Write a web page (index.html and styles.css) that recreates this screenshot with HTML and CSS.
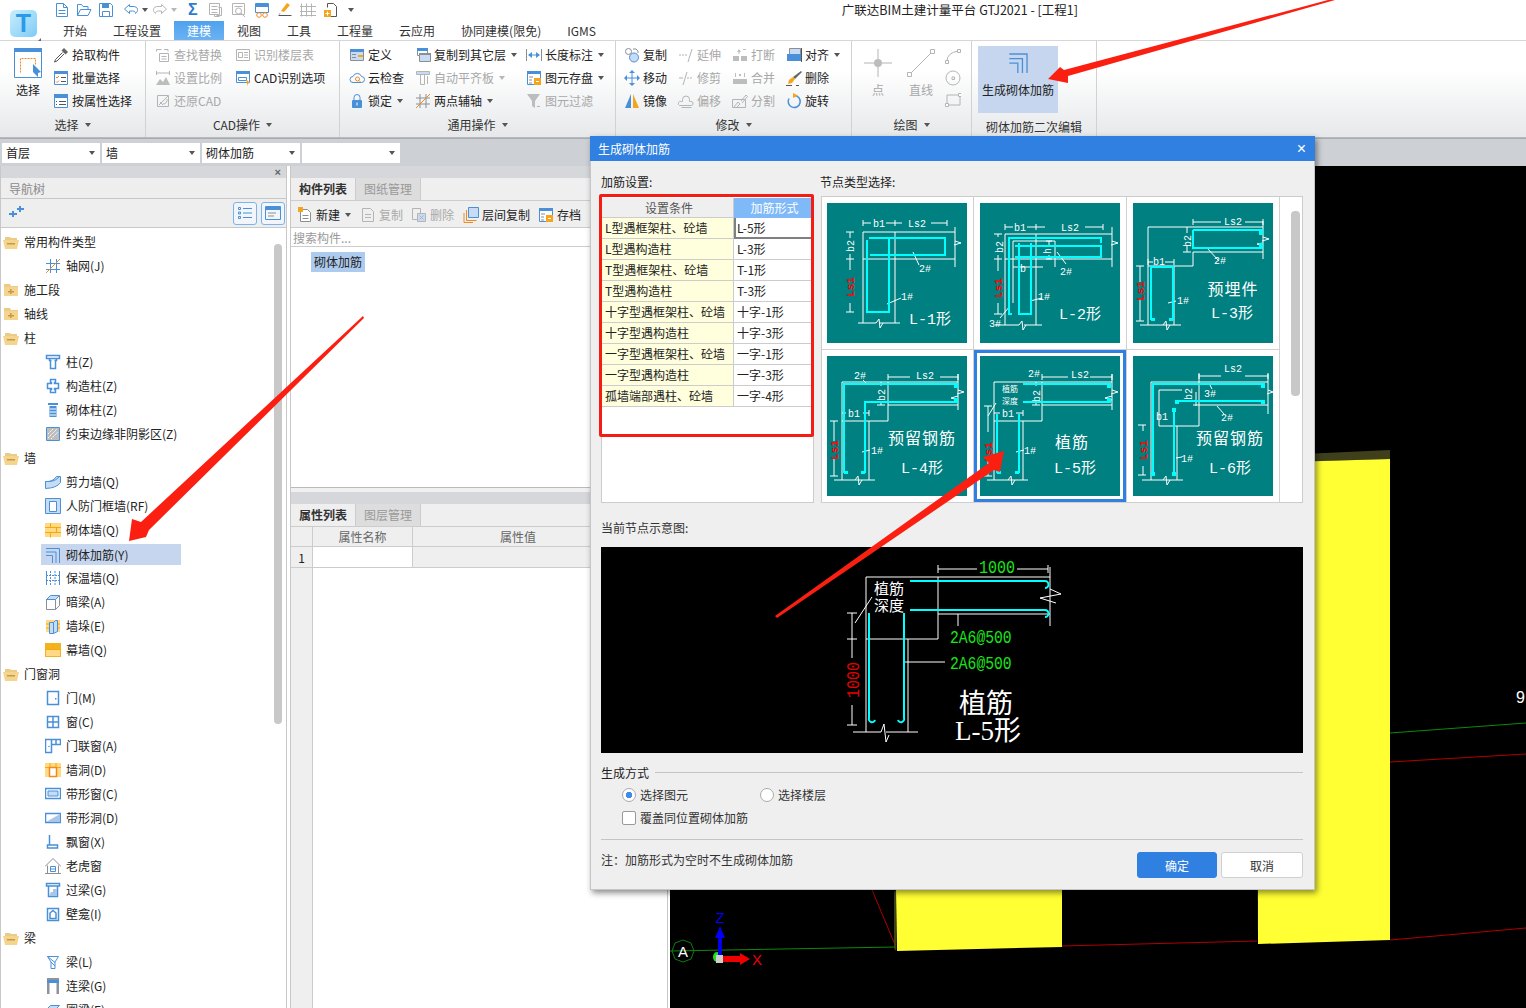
FILE: index.html
```html
<!DOCTYPE html>
<html lang="zh">
<head>
<meta charset="utf-8">
<title>广联达BIM土建计量平台 GTJ2021</title>
<link rel="stylesheet" href="styles.css">
</head>
<body>
<svg class="defs" aria-hidden="true">
<symbol id="new" viewBox="0 0 16 16"><path class="b fw" d="M2.500 1.500h7l4 4v9h-11z"/><path class="b" d="M9.500 1.500v4h4M4.500 8.500h7M4.500 11.500h7"/></symbol>
<symbol id="open" viewBox="0 0 16 16"><path class="b" d="M1.500 13.500v-11h4l1.500 2h5v3"/><path class="b" d="M1.500 13.500l3-6h10.500l-3 6z"/></symbol>
<symbol id="save" viewBox="0 0 16 16"><path class="b" d="M1.500 1.500h11l2 2v11h-13z"/><path class="fb" d="M4 2h7v4H4z"/><path class="b" d="M4.500 14.500v-5h7v5"/></symbol>
<symbol id="undo" viewBox="0 0 16 16"><path class="b" d="M6.500 2.500l-5 4.500 5 4.500v-2.500h3c2 0 3 1 3 2.500 1.500-1 2-2.500 2-4 0-2-2-3-4.500-3h-3.500z"/></symbol>
<symbol id="redo" viewBox="0 0 16 16"><path class="g" d="M9.500 2.500l5 4.500-5 4.500v-2.500h-3c-2 0-3 1-3 2.500-1.500-1-2-2.500-2-4 0-2 2-3 4.500-3h3.500z"/></symbol>
<symbol id="qdoc" viewBox="0 0 16 16"><path class="g" d="M1.500 1.500h10v11h-10zM3.500 4.500h6M3.500 7.500h6M3.500 10.500h6"/><path class="g" d="M10.500 5.500h3v8h-5M6.500 12.500v2h5"/></symbol>
<symbol id="qcalc" viewBox="0 0 16 16"><path class="g" d="M1.500 1.500h12v11h-12zM3.500 4.500h8"/><circle class="g" cx="7.500" cy="9" r="3"/><path class="g" d="M10 11l4 4"/></symbol>
<symbol id="qrep" viewBox="0 0 16 16"><path class="b" d="M1.500 1.500h13v9h-13z"/><path class="fb" d="M2 2h12v3H2z"/><circle class="o" cx="5" cy="13" r="2.300"/><circle class="o" cx="11" cy="13" r="2.300"/></symbol>
<symbol id="qbrush" viewBox="0 0 16 16"><path class="fo" d="M10 1l3 2-6 7-3-1z"/><path class="k" d="M1.500 13.500h13"/><path class="g" d="M3 11l-1 2"/></symbol>
<symbol id="qgrid" viewBox="0 0 16 16"><path class="g" d="M1.500 1.500v13M6.500 1.500v13M11.500 1.500v13M0 4.500h16M0 9.500h16M0 13.500h16"/></symbol>
<symbol id="qadd" viewBox="0 0 16 16"><path class="k" d="M4.500 5.500v-4h6l3 3v10h-6"/><path class="fo" d="M1 8h7v7H1z"/><path class="w1" d="M4.500 9.500v4M2.500 11.500h4"/></symbol>

<symbol id="big-sel" viewBox="0 0 28 30"><path class="b fw" d="M.5.500h27v29h-27z"/><path class="fb" d="M0 0h28v4H0z"/><path class="o dash" d="M6.500 24.500v-14h15v6"/><path class="fb" d="M19 16l8 8-3 1 0 4-5-5z"/></symbol>
<symbol id="pick" viewBox="0 0 16 16"><path class="fk" d="M11 1l4 4-2.500 2.500-4-4z"/><path class="k" d="M9.500 5.500l-7 7-1 2.500 2.500-1 7-7"/></symbol>
<symbol id="batch" viewBox="0 0 16 16"><path class="b fw" d="M1.500 1.500h13v13h-13z"/><path class="fb" d="M1 1h14v3H1z"/><path class="o" d="M3 7l1 1 2-2M3 11.500l1 1 2-2"/><path class="k" d="M8 7.500h5M8 11.500h5"/></symbol>
<symbol id="attr" viewBox="0 0 16 16"><path class="b fw" d="M1.500 1.500h13v13h-13z"/><path class="fb" d="M1 1h14v4H1z"/><path class="k" d="M3 8.500h1M6 8.500h7M3 11.500h1M6 11.500h7"/></symbol>
<symbol id="find" viewBox="0 0 16 16"><path class="g" d="M1.500 4.500v-2h5M9 2.500h4v2M4.500 6.500h9v8h-9zM6.500 9.500h5M6.500 12h5"/></symbol>
<symbol id="floor" viewBox="0 0 16 16"><path class="g" d="M1.500 2.500h13v11h-13zM3.500 5.500h4v5h-4zM9 5.500h4M9 8h4M9 10.500h4"/></symbol>
<symbol id="ratio" viewBox="0 0 16 16"><path class="g" d="M1.500 1v4M14.500 1v4M1.500 3h13"/><path class="fg" d="M1 15l4-6 3 3 3-5 4 8z"/></symbol>
<symbol id="rest" viewBox="0 0 16 16"><path class="g" d="M2.500 2.500h11v11h-11zM4 12L13 3M8 12l-3-3M12 6a4 4 0 0 1-4 5"/></symbol>
<symbol id="cadopt" viewBox="0 0 16 16"><path class="b fw" d="M1.500 1.500h13v11h-13z"/><path class="fb" d="M1 1h14v3H1z"/><path class="b" d="M3.500 7.500h8v3h-8z"/><path class="fo" d="M11 9l4 4-2 .5-.5 2.500z"/></symbol>
<symbol id="def" viewBox="0 0 16 16"><path class="k1 fl" d="M1.500 2.500h13v11h-13z"/><path class="fb" d="M1 2h14v3H1z"/><path class="fo" d="M9 8h5v2H9z"/><path class="k1" d="M3 7.500h4M3 10.500h4"/></symbol>
<symbol id="cloud" viewBox="0 0 16 16"><path class="b" d="M4 12.500a3 3 0 0 1 0-6 4.500 4.500 0 0 1 8.500 0 3 3 0 0 1 0 6z"/><circle class="o" cx="8.500" cy="9" r="2"/><path class="o" d="M10 10.500l1.500 1.500"/></symbol>
<symbol id="lock" viewBox="0 0 16 16"><path class="b" d="M5 7V4.500a3 3 0 0 1 6 0V7"/><rect class="fb" x="3" y="7" width="10" height="8" rx="1"/><path class="w1" d="M8 9.500v3"/></symbol>
<symbol id="cpf" viewBox="0 0 16 16"><path class="k1 fw" d="M2.500 1.500h10v7h-10z"/><path class="fb" d="M2 1h11v3H2z"/><path class="k1 fl" d="M4.500 6.500h11v8h-11z"/><path class="fg2" d="M4 6h12v2H4z"/></symbol>
<symbol id="flat" viewBox="0 0 16 16"><path class="fl g" d="M1.500 1.500h13v3h-13z"/><path class="g" d="M5.500 4.500h4v10h-4z"/><path class="g" d="M12.500 6v8"/></symbol>
<symbol id="twop" viewBox="0 0 16 16"><path class="k1" d="M1 5h14M1 11h14M5 1v14M11 1v14"/><path class="o" d="M1 15L15 1"/></symbol>
<symbol id="len" viewBox="0 0 16 16"><path class="k1" d="M.5 2v12M15.500 2v12"/><path class="b" d="M3 8h10"/><path class="fb" d="M6 5v6L2 8zM10 5v6l4-3z"/></symbol>
<symbol id="stor" viewBox="0 0 16 16"><path class="b fw" d="M1.500 1.500h13v13h-13z"/><path class="fb" d="M1 1h14v3H1z"/><path class="k1" d="M3 7h4M3 10h3M3 13h3"/><path class="fo" d="M8 8h7v7H8z"/><path class="w1" d="M10 11.500h3"/></symbol>
<symbol id="filt" viewBox="0 0 16 16"><path class="fg" d="M1 1h13L9 8v7l-3-2V8z"/><path class="g" d="M11 13.500h3"/></symbol>
<symbol id="cpy" viewBox="0 0 16 16"><circle class="k1" cx="4.500" cy="4.500" r="3"/><circle class="b fl" cx="10" cy="10.500" r="4.500"/><path class="k1" d="M9 2h3l2 2v2"/></symbol>
<symbol id="mov" viewBox="0 0 16 16"><path class="b" d="M8 2v12M2 8h12"/><path class="fb" d="M8 0l3 3H5zM8 16l3-3H5zM0 8l3-3v6zM16 8l-3-3v6z"/></symbol>
<symbol id="mir" viewBox="0 0 16 16"><path class="fb" d="M7 1v14H1z"/><path class="fo" d="M9 1v14h6z"/></symbol>
<symbol id="ext" viewBox="0 0 16 16"><path class="g dash" d="M1 8h8"/><path class="g" d="M14 2L10 15"/></symbol>
<symbol id="trm" viewBox="0 0 16 16"><path class="g" d="M1 8h4"/><path class="g dash" d="M9 8h6"/><path class="g" d="M9 2L5 15"/></symbol>
<symbol id="offs" viewBox="0 0 16 16"><path class="g" d="M1.500 12.500a2 2 0 0 1 2-4h1v-2a3.500 3.500 0 0 1 7 0v2h1a2 2 0 0 1 1 4zM3.500 14.500h10"/></symbol>
<symbol id="brk" viewBox="0 0 16 16"><path class="fg" d="M1 9h6v5H1zM9 9h6v5H9zM7 2l-2 3h1.500v2h1V5H9zM14 2h-3v1h3z"/></symbol>
<symbol id="mrg" viewBox="0 0 16 16"><path class="fg" d="M1 9h14v5H1zM3 3h1v4H3zM12 3h1v4h-1zM7 4h2v2H7z"/></symbol>
<symbol id="spl" viewBox="0 0 16 16"><path class="g" d="M.5 6.500h13v8H.5zM2 14L6 9l2 2-3 3M9 8l5-6 1.500 1.500L10 10"/></symbol>
<symbol id="alg" viewBox="0 0 16 16"><path class="k1 fl" d="M3.500 1.500h11v7h-11z"/><path class="fb" d="M1 7h14v7H1z"/><path class="k" d="M15.500 1v14"/></symbol>
<symbol id="del" viewBox="0 0 16 16"><path class="fk" d="M15 1l1 1-7 7-2-2z"/><path class="fo" d="M7 7l2 2-3 4-4 1 1-4z"/><path class="k" d="M0 15.500h6M10 15.500h3"/></symbol>
<symbol id="rot" viewBox="0 0 16 16"><path class="b s2" d="M8.500 2.500a6 6 0 1 1-5.500 3"/><path class="fo" d="M7 0l5 2.500L7 5z"/></symbol>
<symbol id="big-pt" viewBox="0 0 28 28"><path class="g" d="M14 0v10M14 18v10M0 14h10M18 14h10"/><circle class="fg" cx="14" cy="14" r="4"/></symbol>
<symbol id="big-ln" viewBox="0 0 30 30"><path class="g" d="M4 26L26 4"/><path class="g fw" d="M1.500 24.500h4v4h-4zM24.500 1.500h4v4h-4z"/></symbol>
<symbol id="arc" viewBox="0 0 16 16"><path class="g" d="M2 13Q2 5 13 3"/><path class="g fw" d="M.5 12.500h3v3h-3zM12.500 1.500h3v3h-3z"/></symbol>
<symbol id="circ" viewBox="0 0 16 16"><circle class="g" cx="8" cy="8" r="7"/><path class="g fw" d="M7 7h2.500v2.500H7z"/></symbol>
<symbol id="rct" viewBox="0 0 16 16"><path class="g" d="M2 3h13v10H2z"/><path class="g fw" d="M.5 11.500h3v3h-3zM13.500 1.500h3v3h-3z"/></symbol>
<symbol id="jj" viewBox="0 0 16 16"><path class="b" d="M1 1.500h13.500V16M1 5h10v11M1 8.500h6.500V16"/></symbol>

<symbol id="fo-open" viewBox="0 0 16 14"><path class="f-a" d="M2 2h5l1 1h6v3H2z"/><path class="f-b" d="M0 5h16l-2 9H2z"/><path class="f-c" d="M4 8h8v1.500H4z"/></symbol>
<symbol id="fo-plus" viewBox="0 0 16 14"><path class="f-a" d="M1 1h6l1 2h7v2H1z"/><path class="f-b" d="M1 4h14v9H1z"/><path class="f-c" d="M5 8h6v1.500H5zM7 6h1.500v5H7z"/></symbol>

<symbol id="t-grid" viewBox="0 0 16 16"><path class="b" d="M1 5.500h14M1 11.500h14M5.500 1v14M11.500 1v14"/><path class="o" d="M1 15L15 1"/></symbol>
<symbol id="t-col" viewBox="0 0 16 16"><path class="b s2" d="M1.500 1.500h13v3h-13zM4.500 4.500v2h2M11.500 4.500v2h-2M5.500 6.500v8h5v-8"/></symbol>
<symbol id="t-gz" viewBox="0 0 16 16"><path class="b s2" d="M5.500 1.500h5v3h-1v1h4v5h-4v1h1v3h-5v-3h1v-1h-4v-5h4v-1h-1z"/></symbol>
<symbol id="t-qz" viewBox="0 0 16 16"><path class="fb" d="M3 1h10v2H3zM4.500 4h7v11h-7z"/><path class="w1" d="M5 7h6M5 10h6M5 13h6"/></symbol>
<symbol id="t-yb" viewBox="0 0 16 16"><path class="fg" d="M2 2h12v12H2z"/><path class="b" d="M1.500 1.500h13v13h-13z"/><path class="w1 dash" d="M3 12L12 3M6 13l7-7M3 8l5-5"/></symbol>
<symbol id="t-jlq" viewBox="0 0 16 16"><path class="b fl" d="M.5 7.500Q8 8 11.500 2.500h4v6Q12 14 .5 14.500z"/><path class="b" d="M.5 7.500h4Q11 7 15 2"/></symbol>
<symbol id="t-rf" viewBox="0 0 16 16"><path class="fl b" d="M.5.500h15v15H.5z"/><path class="b fw" d="M4.500 3.500h7v10h-7z"/></symbol>
<symbol id="t-qt" viewBox="0 0 16 14"><path class="fy" d="M0 0h16v14H0z"/><path class="wy" d="M0 4.500h16M0 9.500h16M5.500 0v4.500M11.500 4.500v5M5.500 9.500v5"/></symbol>
<symbol id="t-bw" viewBox="0 0 16 16"><path class="b" d="M1.500 1v14M14.500 1v14"/><path class="b dash" d="M5.500 1v14M10 1v14M1 5.500h14M1 10.500h14"/></symbol>
<symbol id="t-al" viewBox="0 0 16 16"><path class="k1 fw" d="M1.500 5.500h9v10h-9z"/><path class="b fl" d="M1.500 5.500l4-4h9l-4 4z"/><path class="k1" d="M10.500 15.500l4-4v-10"/></symbol>
<symbol id="t-dz" viewBox="0 0 16 16"><path class="fy" d="M1 2h14v12H1z"/><path class="wy" d="M1 6h14M1 10h14"/><path class="b fl" d="M4.500 4.500h4v11h-4zM8.500 4.500l2-2h2v11l-4 2"/></symbol>
<symbol id="t-mq" viewBox="0 0 16 14"><path class="fo2" d="M0 0h16v14H0z"/><path class="wy" d="M0 6.500h16M8 0v6.500"/><path class="fy" d="M1 7h14v6H1z"/></symbol>
<symbol id="t-door" viewBox="0 0 16 16"><path class="b s2" d="M2.500 1.500h11v13h-11z"/><path class="fb" d="M10 8h1.500v1.500H10z"/></symbol>
<symbol id="t-win" viewBox="0 0 16 16"><path class="b s2" d="M2.500 2.500h11v11h-11zM8 2.500v11M2.500 8h11"/></symbol>
<symbol id="t-dw" viewBox="0 0 16 16"><path class="b s2" d="M.5 1.500h6v13h-6zM6.500 1.500h9v5h-9zM11 1.500v5M4 8v1"/></symbol>
<symbol id="t-hole" viewBox="0 0 16 14"><path class="fy" d="M0 0h16v14H0z"/><path class="wy" d="M0 4.500h16M5 0v14M11 0v14"/><path class="o fw s2" d="M4.500 4.500h7v9h-7z"/></symbol>
<symbol id="t-bwin" viewBox="0 0 16 16"><path class="b fw s2" d="M.5 2.500h15v10H.5z"/><path class="b fl" d="M3 5h10v5H3z"/></symbol>
<symbol id="t-bhole" viewBox="0 0 16 16"><path class="b fw s2" d="M.5 3.500h15v9H.5z"/><path class="fb2" d="M1 12L15 4v8z"/></symbol>
<symbol id="t-pc" viewBox="0 0 16 16"><path class="b s2" d="M4.500 1v10h8v3h-10v-3h2"/></symbol>
<symbol id="t-lh" viewBox="0 0 16 16"><path class="k1" d="M0 8.500L8 .5l8 8M2.500 7.500v8h11v-8M0 15.500h16"/><path class="b" d="M5.500 8.500h5v5h-5zM5.500 11h5"/></symbol>
<symbol id="t-gl" viewBox="0 0 16 16"><path class="b s2" d="M1.500 1.500h13v2.500h-13zM3.500 4v10.500h9V4"/><path class="fb2" d="M4 14l2-4h2V7h4v7z"/></symbol>
<symbol id="t-bk" viewBox="0 0 16 16"><path class="b s2" d="M2.500 2.500h11v12h-11zM5 12.500V7l3-2.500L11 7v5.500z"/></symbol>
<symbol id="t-l" viewBox="0 0 16 16"><path class="b" d="M2.500 2.500h11L10 8v6.500H6V8zM2.500 2.500l7.500 6M6 8l4 4"/></symbol>
<symbol id="t-ll" viewBox="0 0 16 16"><path class="fg3" d="M2 0h12v16h-2.500V5h-7v11H2z"/><path class="fb" d="M2 2h12v3H2z"/></symbol>
<symbol id="t-ql" viewBox="0 0 16 16"><path class="b fl" d="M1.500 7.500l4-4h9l-4 4zM1.500 7.500v8M10.500 7.500v8"/></symbol>

<symbol id="m-new" viewBox="0 0 16 16"><path class="k1 fw" d="M3.500 2.500h7l3 3v9h-10z"/><path class="k1" d="M5.500 8.500h6M5.500 11.500h6"/><path class="fo" d="M1 0h5v5H1z"/></symbol>
<symbol id="m-cp" viewBox="0 0 16 16"><path class="g" d="M2.500 1.500h8l3 3v10h-11zM5 7.500h6M5 10.500h6"/></symbol>
<symbol id="m-dl" viewBox="0 0 16 16"><path class="g" d="M1.500 1.500h8v11h-8z"/><path class="g fl" d="M6.500 6.500h8v8h-8z"/><path class="g" d="M8.500 8.500l4 4M12.500 8.500l-4 4"/></symbol>
<symbol id="m-lc" viewBox="0 0 16 16"><path class="b fl" d="M5.500.500h10v10h-10z"/><path class="o" d="M3.500 3v10.500h10M1 6v9.500h9"/></symbol>
<symbol id="v-list" viewBox="0 0 16 16"><path class="b" d="M1.500 2.500h2v2h-2zM1.500 7h2v2h-2zM1.500 11.500h2v2h-2zM6 3.500h9M6 8h9M6 12.500h9"/></symbol>
<symbol id="v-win" viewBox="0 0 16 16"><path class="b" d="M.5 1.500h15v13H.5z"/><path class="fb" d="M1 2h14v3H1z"/><path class="k1" d="M3 8h8M3 11h6"/></symbol>
<symbol id="plus2" viewBox="0 0 16 16"><path class="fb" d="M1 8h3V6h2v2h3v2H6v2H4v-2H1zM9 3h2V1h2v2h3v2h-3v2h-2V5H9z"/></symbol>
</svg>

<div class="app">
  <header class="top">
    <div class="logo-cell">
      <svg class="logo" viewBox="0 0 31 31"><defs><linearGradient id="lg" x1="0" y1="0" x2="1" y2="1"><stop offset="0" stop-color="#c9eefc"/><stop offset="1" stop-color="#7ecbf7"/></linearGradient></defs><rect width="27" height="27" rx="5" fill="url(#lg)"/><text x="13.500" y="22" class="logo-t">T</text><path class="logo-c" d="M31 28v3h-3z"/></svg>
    </div>
    <div class="top-r">
      <div class="qat">
        <svg class="i q-t"><use href="#new"/></svg>
        <svg class="i q-t"><use href="#open"/></svg>
        <svg class="i"><use href="#save"/></svg>
        <svg class="i q-sp"><use href="#undo"/></svg><i class="car q-c1"></i>
        <svg class="i q-ti"><use href="#redo"/></svg><i class="car car-g q-c2"></i>
        <span class="sig">Σ</span>
        <svg class="i"><use href="#qdoc"/></svg>
        <svg class="i"><use href="#qcalc"/></svg>
        <svg class="i"><use href="#qrep"/></svg>
        <svg class="i"><use href="#qbrush"/></svg>
        <svg class="i"><use href="#qgrid"/></svg>
        <svg class="i"><use href="#qadd"/></svg>
        <i class="car q-end"></i>
        <span class="title">广联达BIM土建计量平台 GTJ2021 - [工程1]</span>
      </div>
      <nav class="tabs">
        <span class="tab">开始</span><span class="tab">工程设置</span><span class="tab on">建模</span><span class="tab">视图</span><span class="tab">工具</span><span class="tab">工程量</span><span class="tab">云应用</span><span class="tab">协同建模(限免)</span><span class="tab">IGMS</span>
      </nav>
    </div>
  </header>

  <div class="ribbon">
    <section class="grp g1">
      <div class="gb">
        <div class="big"><svg class="i28"><use href="#big-sel"/></svg><span>选择</span></div>
        <div class="col">
          <div class="it"><svg class="i"><use href="#pick"/></svg>拾取构件</div>
          <div class="it"><svg class="i"><use href="#batch"/></svg>批量选择</div>
          <div class="it"><svg class="i"><use href="#attr"/></svg>按属性选择</div>
        </div>
      </div>
      <div class="gl">选择<i class="car"></i></div>
    </section>
    <section class="grp g2">
      <div class="gb">
        <div class="col c2a">
          <div class="it off"><svg class="i"><use href="#find"/></svg>查找替换</div>
          <div class="it off"><svg class="i"><use href="#ratio"/></svg>设置比例</div>
          <div class="it off"><svg class="i"><use href="#rest"/></svg>还原CAD</div>
        </div>
        <div class="col">
          <div class="it off"><svg class="i"><use href="#floor"/></svg>识别楼层表</div>
          <div class="it"><svg class="i"><use href="#cadopt"/></svg>CAD识别选项</div>
        </div>
      </div>
      <div class="gl">CAD操作<i class="car"></i></div>
    </section>
    <section class="grp g3">
      <div class="gb">
        <div class="col c3a">
          <div class="it"><svg class="i"><use href="#def"/></svg>定义</div>
          <div class="it"><svg class="i"><use href="#cloud"/></svg>云检查</div>
          <div class="it"><svg class="i"><use href="#lock"/></svg>锁定<i class="car"></i></div>
        </div>
        <div class="col c3b">
          <div class="it"><svg class="i"><use href="#cpf"/></svg>复制到其它层<i class="car"></i></div>
          <div class="it off"><svg class="i"><use href="#flat"/></svg>自动平齐板<i class="car car-g"></i></div>
          <div class="it"><svg class="i"><use href="#twop"/></svg>两点辅轴<i class="car"></i></div>
        </div>
        <div class="col">
          <div class="it"><svg class="i"><use href="#len"/></svg>长度标注<i class="car"></i></div>
          <div class="it"><svg class="i"><use href="#stor"/></svg>图元存盘<i class="car"></i></div>
          <div class="it off"><svg class="i"><use href="#filt"/></svg>图元过滤</div>
        </div>
      </div>
      <div class="gl">通用操作<i class="car"></i></div>
    </section>
    <section class="grp g4">
      <div class="gb">
        <div class="col c4">
          <div class="it"><svg class="i"><use href="#cpy"/></svg>复制</div>
          <div class="it"><svg class="i"><use href="#mov"/></svg>移动</div>
          <div class="it"><svg class="i"><use href="#mir"/></svg>镜像</div>
        </div>
        <div class="col c4">
          <div class="it off"><svg class="i"><use href="#ext"/></svg>延伸</div>
          <div class="it off"><svg class="i"><use href="#trm"/></svg>修剪</div>
          <div class="it off"><svg class="i"><use href="#offs"/></svg>偏移</div>
        </div>
        <div class="col c4">
          <div class="it off"><svg class="i"><use href="#brk"/></svg>打断</div>
          <div class="it off"><svg class="i"><use href="#mrg"/></svg>合并</div>
          <div class="it off"><svg class="i"><use href="#spl"/></svg>分割</div>
        </div>
        <div class="col">
          <div class="it"><svg class="i"><use href="#alg"/></svg>对齐<i class="car"></i></div>
          <div class="it"><svg class="i"><use href="#del"/></svg>删除</div>
          <div class="it"><svg class="i"><use href="#rot"/></svg>旋转</div>
        </div>
      </div>
      <div class="gl">修改<i class="car"></i></div>
    </section>
    <section class="grp g5">
      <div class="gb">
        <div class="big off b-pt"><svg class="i28"><use href="#big-pt"/></svg><span>点</span></div>
        <div class="big off b-ln"><svg class="i30"><use href="#big-ln"/></svg><span>直线</span></div>
        <div class="col-sm">
          <svg class="i"><use href="#arc"/></svg>
          <svg class="i"><use href="#circ"/></svg>
          <svg class="i"><use href="#rct"/></svg>
        </div>
      </div>
      <div class="gl">绘图<i class="car"></i></div>
    </section>
    <section class="grp g6">
      <div class="gb">
        <div class="hot"><svg class="i21"><use href="#jj"/></svg><span>生成砌体加筋</span></div>
      </div>
      <div class="gl gl6">砌体加筋二次编辑</div>
    </section>
  </div>

  <div class="combos">
    <div class="combo">首层<i class="car"></i></div>
    <div class="combo">墙<i class="car"></i></div>
    <div class="combo">砌体加筋<i class="car"></i></div>
    <div class="combo"><i class="car"></i></div>
  </div>

  <main class="main">
    <aside class="nav">
      <div class="strip"><span class="x">×</span></div>
      <div class="nav-h">导航树</div>
      <div class="nav-t">
        <svg class="i"><use href="#plus2"/></svg>
        <span class="v-gap"></span>
        <span class="vbtn"><svg class="i"><use href="#v-list"/></svg></span>
        <span class="vbtn"><svg class="i"><use href="#v-win"/></svg></span>
      </div>
      <div class="tree">
        <div class="tree-list">
          <div class="row grp-r"><svg class="fd"><use href="#fo-open"/></svg>常用构件类型</div>
          <div class="row ch"><svg class="i"><use href="#t-grid"/></svg>轴网(J)</div>
          <div class="row grp-r"><svg class="fd"><use href="#fo-plus"/></svg>施工段</div>
          <div class="row grp-r"><svg class="fd"><use href="#fo-plus"/></svg>轴线</div>
          <div class="row grp-r"><svg class="fd"><use href="#fo-open"/></svg>柱</div>
          <div class="row ch"><svg class="i"><use href="#t-col"/></svg>柱(Z)</div>
          <div class="row ch"><svg class="i"><use href="#t-gz"/></svg>构造柱(Z)</div>
          <div class="row ch"><svg class="i"><use href="#t-qz"/></svg>砌体柱(Z)</div>
          <div class="row ch"><svg class="i"><use href="#t-yb"/></svg>约束边缘非阴影区(Z)</div>
          <div class="row grp-r"><svg class="fd"><use href="#fo-open"/></svg>墙</div>
          <div class="row ch"><svg class="i"><use href="#t-jlq"/></svg>剪力墙(Q)</div>
          <div class="row ch"><svg class="i"><use href="#t-rf"/></svg>人防门框墙(RF)</div>
          <div class="row ch"><svg class="i"><use href="#t-qt"/></svg>砌体墙(Q)</div>
          <div class="row ch sel"><svg class="i"><use href="#jj"/></svg>砌体加筋(Y)</div>
          <div class="row ch"><svg class="i"><use href="#t-bw"/></svg>保温墙(Q)</div>
          <div class="row ch"><svg class="i"><use href="#t-al"/></svg>暗梁(A)</div>
          <div class="row ch"><svg class="i"><use href="#t-dz"/></svg>墙垛(E)</div>
          <div class="row ch"><svg class="i"><use href="#t-mq"/></svg>幕墙(Q)</div>
          <div class="row grp-r"><svg class="fd"><use href="#fo-open"/></svg>门窗洞</div>
          <div class="row ch"><svg class="i"><use href="#t-door"/></svg>门(M)</div>
          <div class="row ch"><svg class="i"><use href="#t-win"/></svg>窗(C)</div>
          <div class="row ch"><svg class="i"><use href="#t-dw"/></svg>门联窗(A)</div>
          <div class="row ch"><svg class="i"><use href="#t-hole"/></svg>墙洞(D)</div>
          <div class="row ch"><svg class="i"><use href="#t-bwin"/></svg>带形窗(C)</div>
          <div class="row ch"><svg class="i"><use href="#t-bhole"/></svg>带形洞(D)</div>
          <div class="row ch"><svg class="i"><use href="#t-pc"/></svg>飘窗(X)</div>
          <div class="row ch"><svg class="i"><use href="#t-lh"/></svg>老虎窗</div>
          <div class="row ch"><svg class="i"><use href="#t-gl"/></svg>过梁(G)</div>
          <div class="row ch"><svg class="i"><use href="#t-bk"/></svg>壁龛(I)</div>
          <div class="row grp-r"><svg class="fd"><use href="#fo-open"/></svg>梁</div>
          <div class="row ch"><svg class="i"><use href="#t-l"/></svg>梁(L)</div>
          <div class="row ch"><svg class="i"><use href="#t-ll"/></svg>连梁(G)</div>
          <div class="row ch"><svg class="i"><use href="#t-ql"/></svg>圈梁(E)</div>
        </div>
        <div class="track"><div class="thumb"></div></div>
      </div>
    </aside>

    <section class="mid">
      <div class="strip"></div>
      <div class="ptabs"><span class="ptab on">构件列表</span><span class="ptab">图纸管理</span></div>
      <div class="mtool">
        <span class="mt m-a"><svg class="i"><use href="#m-new"/></svg>新建<i class="car"></i></span>
        <span class="mt off m-b"><svg class="i"><use href="#m-cp"/></svg>复制</span>
        <span class="mt off m-c"><svg class="i"><use href="#m-dl"/></svg>删除</span>
        <span class="mt m-d"><svg class="i"><use href="#m-lc"/></svg>层间复制</span>
        <span class="mt"><svg class="i"><use href="#stor"/></svg>存档</span>
      </div>
      <div class="search">搜索构件...</div>
      <div class="clist"><span class="chip">砌体加筋</span></div>
      <div class="strip2"></div>
      <div class="ptabs"><span class="ptab on">属性列表</span><span class="ptab">图层管理</span></div>
      <div class="ptable">
        <div class="pth"><span class="p0"></span><span class="p1">属性名称</span><span class="p2">属性值</span></div>
        <div class="ptr"><span class="p0">1</span><span class="p1 pw"></span><span class="p2"></span></div>
        <div class="pfill"><span class="p0"></span></div>
      </div>
    </section>

    <section class="view">
      <svg class="scene" viewBox="0 0 856 842">
        <path class="ln-g" d="M0 785L226 781"/>
        <path class="ln-r" d="M392 780L587 775M202 724L226 781M720 774L856 762"/>
        <path class="ln-g" d="M720 567L856 557"/>
        <path class="ln-r" d="M720 596L856 588"/>
        <path fill="#ffff33" d="M226 724h166v57l-165 4z"/>
        <path fill="#3f3f1c" d="M587 290l133-6v9l-133 4z"/>
        <path fill="#ffff33" d="M587 297l133-4v481l-132 4z"/>
        <path fill="#40421a" d="M226 724v61l-2-3v-56z"/>
        <path class="oct" d="M13 774l8 3 3 8-3 8-8 3-8-3-3-8 3-8z"/>
        <text class="sc-a" x="13" y="791">A</text>
        <ellipse fill="#22dd22" cx="47" cy="791" rx="4" ry="5"/>
        <path fill="#0000ee" d="M48 790V772H45l5-12 5 12H52v18z"/>
        <path fill="#ee0000" d="M52 790h18v-3l10 6-10 6v-3H52z"/>
        <rect fill="#cfcfcf" x="46" y="789" width="7" height="8"/>
        <text class="sc-z" x="50" y="757">Z</text>
        <text class="sc-x" x="82" y="799">X</text>
        <text class="sc-9" x="846" y="537">9</text>
      </svg>
    </section>
  </main>

  <div class="dlg">
    <div class="dlg-h"><span>生成砌体加筋</span><span class="dlg-x">×</span></div>
    <div class="dlg-b">
      <div class="dtop">
        <div class="dleft">
          <div class="lab">加筋设置:</div>
          <div class="tblbox">
            <div class="tbl">
              <div class="th1">设置条件</div><div class="th2">加筋形式</div>
              <div class="cy">L型遇框架柱、砼墙</div><div class="cw cur">L-5形</div>
              <div class="cy">L型遇构造柱</div><div class="cw">L-3形</div>
              <div class="cy">T型遇框架柱、砼墙</div><div class="cw">T-1形</div>
              <div class="cy">T型遇构造柱</div><div class="cw">T-3形</div>
              <div class="cy">十字型遇框架柱、砼墙</div><div class="cw">十字-1形</div>
              <div class="cy">十字型遇构造柱</div><div class="cw">十字-3形</div>
              <div class="cy">一字型遇框架柱、砼墙</div><div class="cw">一字-1形</div>
              <div class="cy">一字型遇构造柱</div><div class="cw">一字-3形</div>
              <div class="cy">孤墙端部遇柱、砼墙</div><div class="cw">一字-4形</div>
            </div>
            <div class="redbox"></div>
          </div>
        </div>
        <div class="dright">
          <div class="lab lab-r">节点类型选择:</div>
          <div class="thbox">
            <div class="thgrid">
              <div class="cell">
                <svg class="dia" viewBox="0 0 140 140">
                  <path class="w" d="M36 20h8M59 20h16M104 20h16M36 17v6M68 17v6M120 17v6M36 29v91M36 29h92M68 29v91M36 56h92M128 24v40M31 120h18M53 120h20M23 29v6M23 51v16M23 100v9M19 29h8M19 56h8M19 109h8M86 49l6 13M60 101l14-6M49 120l3-4 1 9 3-5M128 38l6 2-7 2"/>
                  <path class="c" d="M40 37v72h22V36M42 35h76v17H43"/>
                  <text class="t" x="52" y="24">b1</text><text class="t" x="90" y="24">Ls2</text>
                  <text class="t" transform="translate(27 43) rotate(-90)">b2</text>
                  <text class="t rd" transform="translate(27 84) rotate(-90)">Ls1</text>
                  <text class="t" x="98" y="69">2#</text><text class="t" x="80" y="97">1#</text>
                  <text class="nm" x="103" y="121">L-1形</text>
                </svg>
              </div>
              <div class="cell">
                <svg class="dia" viewBox="0 0 140 140">
                  <path class="w" d="M25 24h8M47 24h18M105 24h18M25 21v6M56 21v6M123 21v6M25 31v91M25 31h107M56 31v91M25 56h107M132 24v40M33 38h42v26M33 38v62M15 122h24M44 122h18M18 31v3M18 52v16M18 100v11M14 31h8M14 56h8M14 111h8M33 64h30M66 38h6M66 56h6M69 38v5M69 52v4M77 49l9 12M50 98l12-3M20 115l10-12M39 122l3-4 1 9 3-5M132 38l6 2-7 2"/>
                  <path class="c" d="M32 111h-3V35h92v5M35 43h86v11H35M39 40v71h12V40"/>
                  <text class="t" x="40" y="28">b1</text><text class="t" x="90" y="28">Ls2</text>
                  <text class="t" transform="translate(23 44) rotate(-90)">b2</text>
                  <text class="t" x="43" y="69">b</text>
                  <text class="t" transform="translate(71 48) rotate(-90)">h</text>
                  <text class="t rd" transform="translate(22 85) rotate(-90)">Ls1</text>
                  <text class="t" x="86" y="72">2#</text><text class="t" x="64" y="97">1#</text><text class="t" x="15" y="124">3#</text>
                  <text class="nm" x="100" y="116">L-2形</text>
                </svg>
              </div>
              <div class="cell cell3">
                <svg class="dia" viewBox="0 0 140 140">
                  <path class="w" d="M15 24v98M15 24h115M15 63h45M60 49v14M60 49h70M130 18v38M41 63v59M7 122h41M60 19h28M112 19h18M60 16v6M130 16v6M7 63v16M7 96v22M3 63h8M3 118h8M15 59h5M32 59h9M15 56v6M41 56v6M54 24v6M54 42v7M50 49h8M74 45l12 13M35 100l8-2M30 122l3-4 1 9 3-5M130 34l6 2-7 2M130 40l-6 1 6 2"/>
                  <path class="c" d="M60 27h70M60 27v18h70M18 117V64h22v53"/>
                  <path class="cq" d="M18 115h4v3h-4zM40 115h-4v3h4zM126 28h4v4h-4zM126 40h4v4h-4z"/>
                  <text class="t" x="26" y="62">b1</text><text class="t" x="100" y="22">Ls2</text>
                  <text class="t" transform="translate(58 38) rotate(-90)">b2</text>
                  <text class="t rd" transform="translate(11 88) rotate(-90)">Ls1</text>
                  <text class="t" x="87" y="61">2#</text><text class="t" x="50" y="101">1#</text>
                  <text class="cn" x="100" y="92">预埋件</text>
                  <text class="nm" x="99" y="115">L-3形</text>
                </svg>
              </div>
              <div class="cell">
                <svg class="dia" viewBox="0 0 140 140">
                  <path class="w" d="M15 26v98M15 26h116M15 65h46M61 26v39M61 49h70M131 18v36M42 65v59M7 124h41M61 21h22M113 21h18M61 18v6M131 18v6M7 65v20M7 103v17M3 65h8M3 120h8M15 57h4M36 57h6M42 54v6M54 26v4M54 46v3M50 49h8M35 96l8-2M36 24l4 4M28 124l3-4 1 9 3-5M131 34l6 2-7 2M131 40l-7 2 7 2"/>
                  <path class="c" d="M17 117V28h114M38 117V46h93"/>
                  <path class="cq" d="M17 115h4v3h-4zM38 115h-4v3h4zM127 28h4v4h-4zM127 42h4v4h-4z"/>
                  <text class="t" x="33" y="23">2#</text><text class="t" x="98" y="23">Ls2</text>
                  <text class="t" transform="translate(58 39) rotate(-90)">b2</text>
                  <text class="t" x="27" y="61">b1</text>
                  <text class="t rd" transform="translate(11 94) rotate(-90)">Ls1</text>
                  <text class="t" x="50" y="98">1#</text>
                  <text class="cn" x="95" y="88">预留钢筋</text>
                  <text class="nm" x="95" y="117">L-4形</text>
                </svg>
              </div>
              <div class="cell sel">
                <svg class="dia" viewBox="0 0 140 140">
                  <path class="w" d="M14 26v98M14 26h118M14 65h48M62 26v39M62 49h70M132 18v36M43 65v59M7 124h41M62 21h26M110 21h22M62 18v6M132 18v6M8 50v26M8 100v20M4 50h8M4 120h8M14 57h6M36 57h7M43 54v6M56 26v4M56 46v3M52 49h8M36 96l8-2M8 60l8-13M28 124l3-4 1 9 3-5M132 34l6 2-7 2M132 40l-7 2 7 2"/>
                  <path class="c" d="M43 28h88M43 46h88M17 58v59M39 58v59"/>
                  <path class="cq" d="M17 115h4v3h-4zM39 115h-4v3h4zM127 28h4v4h-4zM127 42h4v4h-4z"/>
                  <text class="t" x="54" y="21">2#</text><text class="t" x="100" y="22">Ls2</text>
                  <text class="tc" x="30" y="36">植筋</text><text class="tc" x="30" y="48">深度</text>
                  <text class="t" transform="translate(60 40) rotate(-90)">b2</text>
                  <text class="t" x="28" y="61">b1</text>
                  <text class="t rd" transform="translate(12 96) rotate(-90)">Ls1</text>
                  <text class="t" x="50" y="98">1#</text>
                  <text class="cn" x="92" y="92">植筋</text>
                  <text class="nm" x="95" y="117">L-5形</text>
                </svg>
              </div>
              <div class="cell cell3">
                <svg class="dia" viewBox="0 0 140 140">
                  <path class="w" d="M18 26v98M18 26h117M135 18v40M66 18v52M26 70h40M26 34v36M26 34h23M44 70v54M60 49h75M9 124h41M66 20h22M112 20h23M66 17v6M135 17v6M10 69v6M10 110v9M5 69h8M5 119h8M63 36v14M76 27l3 6M84 50l7 8M43 102l6-1M30 124l3-4 1 9 3-5M135 34l5 2-6 2"/>
                  <path class="c" d="M20 119V28h112M41 119V52M45 45h87"/>
                  <path class="cq" d="M18 116h4v4h-4zM39 116h4v4h-4zM39 52h4v4h-4zM42 44h4v4h-4zM128 28h4v4h-4zM128 44h4v4h-4z"/>
                  <text class="t" x="100" y="16">Ls2</text><text class="t" x="77" y="41">3#</text>
                  <text class="t" transform="translate(59 38) rotate(-90)">b2</text>
                  <text class="t" x="94" y="65">2#</text><text class="t" x="29" y="64">b1</text><text class="t" x="54" y="106">1#</text>
                  <text class="t rd" transform="translate(14 94) rotate(-90)">Ls1</text>
                  <text class="cn" x="97" y="88">预留钢筋</text>
                  <text class="nm" x="97" y="117">L-6形</text>
                </svg>
              </div>
            </div>
            <div class="thtrack"><div class="ththumb"></div></div>
          </div>
        </div>
      </div>
      <div class="lab2">当前节点示意图:</div>
      <div class="pv">
        <svg class="pvs" viewBox="0 0 702 206">
          <path class="w" d="M265 30v155M265 30h184M337 30v62M265 92h72M307 92v93M337 67h112M449 20v59M252 185h28M285 185h32M337 22h39M416 22h31M337 18v8M447 18v8M251 66v45M251 158v20M246 66h10M246 92h10M246 178h10M254 76l17-26M357 67v12M303 115h41M280 185l3-8 2 18 3-7M449 42l11 5-21 4 16 5"/>
          <path class="c" d="M309 34h135a3 3 0 0 1 0 7M309 63h135a3 3 0 0 1 0 7M268 66v105a3 3 0 0 0 6 2M303 66v105a3 3 0 0 1-6 2"/>
          <text class="pv-w" x="288" y="47">植筋</text>
          <text class="pv-w" x="288" y="64">深度</text>
          <text class="pv-g" transform="translate(378 26) scale(1 1.25)">1000</text>
          <text class="pv-r" transform="translate(258 133) rotate(-90) scale(1 1.25)">1000</text>
          <text class="pv-s" transform="translate(349 96) scale(1 1.2)">2A6@500</text>
          <text class="pv-s" transform="translate(349 122) scale(1 1.2)">2A6@500</text>
          <text class="pv-n" x="385" y="166">植筋</text>
          <text class="pv-n" x="387" y="193">L-5形</text>
        </svg>
      </div>
      <div class="fs"><span>生成方式</span><i class="fsl"></i></div>
      <div class="opts">
        <label class="opt o1"><i class="rad on"></i>选择图元</label>
        <label class="opt"><i class="rad"></i>选择楼层</label>
      </div>
      <div class="opts o2"><label class="opt"><i class="chk"></i>覆盖同位置砌体加筋</label></div>
      <div class="hr"></div>
      <div class="foot">
        <span class="note">注&#xFF1A;加筋形式为空时不生成砌体加筋</span>
        <span class="btn pri">确定</span>
        <span class="btn">取消</span>
      </div>
    </div>
  </div>

  <svg class="arrows" viewBox="0 0 1526 1008">
    <path d="M129 541L132 519L141 522L363 316L364 318L149 530L146 537Z"/>
    <path d="M1048 79L1060 67L1064 70L1328 0L1335 0L1068 76L1068 83Z"/>
    <path d="M1004 451L983 457L989 463L775 616L777 618L994 470L1000 472Z"/>
  </svg>
</div>
</body>
</html>
```

FILE: styles.css
```css
* { box-sizing: border-box; }
html, body { margin: 0; height: 100%; overflow: hidden; }
body { font: 12px/16px "Noto Sans CJK SC", "Liberation Sans", sans-serif; color: #222; background: #fff; }
i { font-style: normal; }
.defs { display: none; }
.app { position: relative; width: 1526px; height: 1008px; display: flex; flex-direction: column; overflow: hidden; }

/* icon primitives */
.b, .g, .o, .k, .k1, .w1, .wy { fill: none; stroke-width: 1; }
.b { stroke: #4a90d9; }
.g { stroke: #b4b4b4; }
.o { stroke: #ee8a22; }
.k { stroke: #555; }
.k1 { stroke: #8a8f96; }
.w1 { stroke: #fff; }
.wy { stroke: #f6a90f; }
.s2 { stroke-width: 1.500; }
.fw { fill: #fff; }
.fb { fill: #4a90d9; stroke: none; }
.fb2 { fill: #a9c6ea; stroke: none; }
.fo { fill: #f5a51d; stroke: none; }
.fo2 { fill: #f5b21f; stroke: none; }
.fy { fill: #ffd983; stroke: none; }
.fk { fill: #666; stroke: none; }
.fg { fill: #bdbdbd; stroke: none; }
.fg2 { fill: #8a8f96; stroke: none; }
.fg3 { fill: #8b949e; stroke: none; }
.fl { fill: #c7dcf4; }
.f-a { fill: #eccb88; }
.f-b { fill: #f5d48f; }
.f-c { fill: #c39a49; }
.dash { stroke-dasharray: 2 1; }
.i { width: 16px; height: 16px; flex: none; display: block; }
.i28 { width: 28px; height: 30px; display: block; }
.i30 { width: 30px; height: 30px; display: block; }
.i21 { width: 21px; height: 21px; display: block; }
.fd { width: 16px; height: 14px; flex: none; }
.car { display: inline-block; width: 0; height: 0; border: 3px solid transparent; border-top: 4px solid #555; border-bottom: 0; flex: none; }
.car-g { border-top-color: #b8b8b8; }

/* top */
.top { height: 41px; display: flex; background: #fff; border-bottom: 1px solid #d6d6d6; flex: none; }
.logo-cell { width: 50px; padding: 10px 0 0 10px; flex: none; }
.logo { width: 31px; height: 31px; display: block; overflow: visible; }
.logo-t { font: 700 25px "Liberation Sans", sans-serif; fill: #2a9be8; text-anchor: middle; }
.logo-c { fill: #666; }
.top-r { flex: 1; display: flex; flex-direction: column; }
.qat { height: 21px; display: flex; align-items: center; padding: 0 0 2px 4px; }
.qat .i { margin-right: 7px; }
.qat .i.q-t { margin-right: 6px; }
.qat .i.q-sp { margin-left: 2px; margin-right: 3px; }
.qat .i.q-ti { margin-left: 0; margin-right: 3px; }
.q-c1 { margin-right: 4px; }
.q-c2 { margin-right: 11px; }
.sig { color: #2d7bd0; font: 700 16px/16px "Liberation Sans", sans-serif; width: 12px; margin-right: 8px; }
.q-end { margin-left: 2px; }
.title { margin-left: auto; margin-right: 448px; color: #222; font-size: 12.500px; white-space: pre; }
.tabs { display: flex; height: 19px; align-items: stretch; }
.tab { padding: 0 13px; line-height: 19px; color: #333; }
.tab.on { background: linear-gradient(#4fa2ee, #6bb2f2); color: #fff; }

/* ribbon */
.ribbon { height: 97px; display: flex; flex: none; background: linear-gradient(#ffffff 30%, #e6e8ea); border-bottom: 1px solid #b8babd; }
.grp { display: flex; flex-direction: column; border-right: 1px solid #d0d2d4; }
.gb { height: 74px; padding-top: 2px; display: flex; }
.gl { height: 20px; display: flex; align-items: center; justify-content: center; gap: 6px; color: #333; }
.gl6 { padding-top: 4px; }
.g1 { width: 146px; } .g1 .gb { padding-left: 12px; }
.g2 { width: 194px; } .g2 .gb { padding-left: 9px; }
.g3 { width: 276px; } .g3 .gb { padding-left: 9px; }
.g4 { width: 236px; } .g4 .gb { padding-left: 8px; }
.g5 { width: 120px; } .g5 .gb { padding-left: 12px; }
.g6 { width: 125px; } .g6 .gb { padding-left: 6px; padding-top: 5px; }
.big { width: 32px; display: flex; flex-direction: column; align-items: center; padding-top: 5px; gap: 4px; margin-right: 9px; }
.big.off { color: #a8a8a8; }
.b-pt { width: 28px; margin-right: 14px; }
.b-ln { width: 30px; margin-right: 9px; }
.col { display: flex; flex-direction: column; }
.c2a { width: 80px; } .c3a { width: 66px; } .c3b { width: 111px; } .c4 { width: 54px; }
.col-sm { display: flex; flex-direction: column; justify-content: space-between; height: 60px; margin-top: 5px; }
.it { height: 23px; display: flex; align-items: center; gap: 3px; white-space: nowrap; }
.it .car { margin-left: 2px; }
.it.off { color: #a8a8a8; }
.hot { width: 80px; height: 67px; background: #c6d6ee; display: flex; flex-direction: column; align-items: center; padding-top: 6px; gap: 9px; }

/* combo bar */
.combos { height: 28px; flex: none; display: flex; gap: 2px; padding: 4px 0 3px 2px; background: #cdd0d4; border-top: 1px solid #a9abae; }
.combo { width: 98px; background: #fff; display: flex; align-items: center; justify-content: space-between; padding: 0 5px 0 4px; }
.combo:last-child { justify-content: flex-end; }

/* main */
.main { flex: 1; display: flex; min-height: 0; background: #fff; }
.nav { width: 287px; flex: none; display: flex; flex-direction: column; border-left: 1px solid #c8c8c8; border-right: 1px solid #c8c8c8; margin-right: 3px; }
.strip { height: 12px; background: #d5d7db; display: flex; justify-content: flex-end; align-items: center; flex: none; }
.x { color: #666; font: 700 11px/12px "Liberation Sans", sans-serif; margin-right: 5px; }
.nav-h { height: 21px; background: #eee; color: #8a8a8a; padding: 2px 8px; border-bottom: 1px solid #c8c8c8; line-height: 18px; flex: none; }
.nav-t { height: 29px; background: #eee; display: flex; align-items: center; padding: 0 1px 0 7px; gap: 4px; border-bottom: 1px solid #c8c8c8; flex: none; }
.v-gap { flex: 1; }
.vbtn { width: 24px; height: 23px; border: 1px solid #7ab4ef; border-radius: 3px; background: #f2f6fb; display: flex; align-items: center; justify-content: center; }
.tree { flex: 1; display: flex; min-height: 0; overflow: hidden; }
.tree-list { flex: 1; padding-top: 2px; min-width: 0; }
.row { height: 24px; display: flex; align-items: center; white-space: nowrap; }
.grp-r { padding-left: 2px; gap: 5px; }
.ch { padding-left: 44px; gap: 5px; }
.row.sel { background: #c6d6ee; height: 21px; margin: 2px 0 1px 40px; width: 140px; padding-left: 4px; }
.track { width: 12px; flex: none; padding-top: 16px; }
.thumb { width: 8px; height: 480px; background: #c8c8c8; border-radius: 4px; }

/* middle */
.mid { width: 378px; flex: none; display: flex; flex-direction: column; border-left: 1px solid #c8c8c8; border-right: 1px solid #c8c8c8; }
.ptabs { height: 23px; display: flex; background: #efefef; border-bottom: 1px solid #ccc; flex: none; }
.ptab { width: 65px; text-align: center; line-height: 22px; background: #ddd; color: #999; border-right: 1px solid #ccc; }
.ptab.on { background: #efefef; color: #333; font-weight: 700; }
.mtool { height: 27px; background: #efefef; display: flex; align-items: center; padding: 1px 0 0 6px; border-bottom: 1px solid #ccc; flex: none; white-space: nowrap; }
.mt { display: flex; align-items: center; gap: 3px; }
.mt.off { color: #aaa; }
.m-a { width: 63px; } .m-a .car { margin-left: 2px; }
.m-b { width: 51px; } .m-c { width: 52px; } .m-d { width: 75px; }
.search { height: 19px; padding-left: 2px; color: #999; line-height: 19px; border-bottom: 1px solid #ccc; flex: none; }
.clist { height: 241px; padding: 5px 0 0 20px; flex: none; border-bottom: 1px solid #bbb; }
.chip { display: inline-block; background: #adcbee; padding: 2px 3px; height: 20px; }
.strip2 { height: 16px; flex: none; background: linear-gradient(#f0f0f0 4px, #d5d7db 4px); }
.ptable { flex: 1; display: flex; flex-direction: column; }
.pth, .ptr { display: flex; flex: none; border-bottom: 1px solid #ccc; }
.pth { height: 20px; background: #efefef; color: #666; line-height: 20px; text-align: center; }
.ptr { height: 21px; background: #efefef; line-height: 21px; text-align: center; }
.p0 { width: 22px; border-right: 1px solid #ccc; background: #efefef; }
.p1 { width: 100px; border-right: 1px solid #ccc; }
.pw { background: #fff; }
.p2 { width: 210px; flex: none; }
.pfill { flex: 1; display: flex; }

/* 3D */
.view { flex: 1; margin-left: 2px; background: #000; min-width: 0; }
.scene { width: 856px; height: 842px; display: block; }
.ln-g { stroke: #0c8a0c; fill: none; }
.ln-r { stroke: #b00000; fill: none; }
.oct { fill: none; stroke: #0f7a0f; }
.sc-a { fill: #fff; font: 15px "Liberation Sans", sans-serif; text-anchor: middle; }
.sc-z { fill: #0000ee; font: 15px "Liberation Sans", sans-serif; text-anchor: middle; }
.sc-x { fill: #ee0000; font: 15px "Liberation Sans", sans-serif; }
.sc-9 { fill: #fff; font: 16px "Liberation Sans", sans-serif; }

/* dialog */
.dlg { position: absolute; left: 590px; top: 136px; width: 725px; height: 754px; background: #efefef; box-shadow: 2px 3px 6px rgba(0,0,0,.45); border: 1px solid #c4c6c9; border-top: 0; }
.dlg-h { height: 25px; background: #2f80e1; color: #fff; display: flex; justify-content: space-between; align-items: center; padding: 0 9px 0 8px; margin: 0 -1px; }
.dlg-x { font: 16px/16px "Liberation Sans", sans-serif; }
.dlg-b { padding: 12px 11px 0 10px; display: flex; flex-direction: column; }
.dtop { display: flex; gap: 7px; }
.dleft { width: 213px; }
.dright { width: 482px; }
.lab { height: 23px; line-height: 18px; }
.lab-r { margin-left: -1px; }
.tblbox { height: 307px; background: #fff; border: 1px solid #ccc; padding: 1px 0 0 0; position: relative; }
.tbl { display: grid; grid-template-columns: 132px 78px; grid-template-rows: 20px repeat(9, 21px); width: 210px; }
.tbl > div { padding-left: 3px; line-height: 20px; white-space: nowrap; border-bottom: 1px solid #ccc; border-right: 1px solid #ccc; }
.tbl .th1 { background: #efefef; color: #555; text-align: center; line-height: 20px; }
.tbl .th2 { background: #7fb9f8; color: #fff; text-align: center; line-height: 20px; border-right: 0; border-bottom: 0; }
.tbl .cy { background: #ffffde; }
.tbl .cw { background: #fff; padding-left: 3px; border-right: 0; }
.tbl .cur { border-left: 2px solid #808080; border-bottom: 2px solid #808080; padding-left: 1px; }
.redbox { position: absolute; left: -3px; top: -3px; width: 215px; height: 243px; border: 3px solid #f51c14; border-radius: 2px; }
.thbox { height: 307px; background: #fff; border: 1px solid #ccc; display: flex; }
.thgrid { display: grid; grid-template-columns: 152px 153px 153px; grid-template-rows: 153px 153px; width: 458px; flex: none; }
.cell { border-right: 1px solid #d0d0d0; border-bottom: 1px solid #d0d0d0; padding: 6px 0 0 5px; }
.cell:nth-child(n+2) { padding-left: 6px; }
.cell:nth-child(4) { padding-left: 5px; }
.cell.sel { box-shadow: inset 0 0 0 3px #2f80e1; }
.dia { width: 140px; height: 140px; display: block; background: #008080; }
.dia .w { stroke: #fff; fill: none; stroke-width: 1; }
.dia .c { stroke: #00ffff; fill: none; stroke-width: 2; }
.cq { fill: #00ffff; }
.t { fill: #fff; font: 10px "Liberation Mono", monospace; text-anchor: middle; }
.dia .rd { fill: #ff0000; font-weight: 700; font-size: 11px; }
.tc { fill: #fff; font: 8px "Noto Sans CJK SC", sans-serif; text-anchor: middle; }
.nm { fill: #fff; font: 15px "Liberation Mono", "Noto Sans CJK SC", monospace; text-anchor: middle; }
.cn { fill: #fff; font: 16px "Noto Sans CJK SC", sans-serif; text-anchor: middle; letter-spacing: 1px; }
.thtrack { flex: 1; padding: 14px 0 0 11px; }
.ththumb { width: 9px; height: 185px; background: #c8c8c8; border-radius: 4px; }
.lab2 { margin-top: 16px; height: 18px; line-height: 18px; color: #333; }
.pv { margin-top: 10px; width: 702px; height: 206px; background: #000; }
.pvs { width: 702px; height: 206px; display: block; }
.pvs .w { stroke: #fff; fill: none; }
.pvs .c { stroke: #00ffff; fill: none; stroke-width: 2; }
.pv-w { fill: #fff; font: 15px "Noto Sans CJK SC", sans-serif; text-anchor: middle; }
.pv-g { fill: #19e619; font: 15px "Liberation Mono", monospace; }
.pv-r { fill: #e60000; font: 15px "Liberation Mono", monospace; text-anchor: middle; }
.pv-s { fill: #19e619; font: 14.700px "Liberation Mono", monospace; }
.pv-n { fill: #fff; font: 27px "Liberation Serif", "Noto Sans CJK SC", serif; text-anchor: middle; }
.fs { margin-top: 11px; height: 18px; display: flex; align-items: center; gap: 6px; }
.fsl { flex: 1; height: 1px; background: #c4c4c4; margin-top: -2px; }
.opts { display: flex; margin-top: 4px; padding-left: 21px; height: 18px; }
.opts.o2 { margin-top: 5px; }
.opt { display: flex; align-items: center; gap: 4px; color: #333; }
.o1 { width: 138px; }
.rad { width: 14px; height: 14px; border-radius: 50%; border: 1px solid #aaa; background: #fff; flex: none; display: block; }
.rad.on { background: radial-gradient(circle, #3e8ee8 3px, #fff 3.500px); }
.chk { width: 14px; height: 14px; border: 1px solid #999; border-radius: 2px; background: #fff; flex: none; display: block; }
.hr { margin-top: 12px; height: 1px; background: #c4c4c4; width: 702px; }
.foot { margin-top: 12px; display: flex; gap: 4px; width: 702px; }
.note { flex: 1; line-height: 16px; color: #333; }
.btn { width: 82px; height: 26px; border: 1px solid #d0d0d0; border-radius: 3px; background: #fff; text-align: center; line-height: 26px; color: #333; }
.btn.pri { width: 80px; background: #2f80e1; border-color: #2f80e1; color: #fff; }

/* annotation arrows */
.arrows { position: absolute; left: 0; top: 0; width: 1526px; height: 1008px; pointer-events: none; fill: #fb1f12; }
```
